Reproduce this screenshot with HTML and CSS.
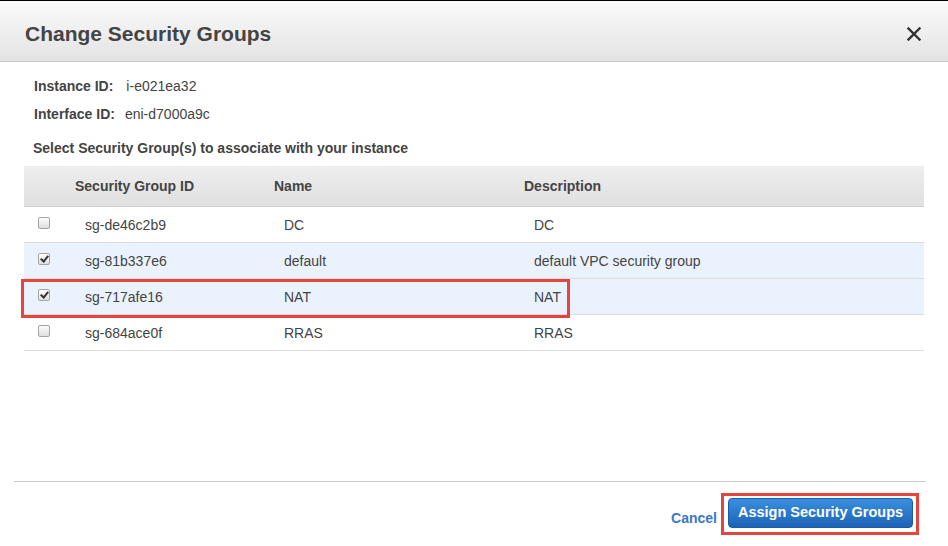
FILE: index.html
```html
<!DOCTYPE html>
<html lang="en">
<head>
  <meta charset="UTF-8">
  <meta name="viewport" content="width=device-width, initial-scale=1.0">
  <title>Change Security Groups</title>
  <link rel="stylesheet" href="styles.css">
</head>
<body>
  <div class="modal">
    <div class="modal-header">
      <h1>Change Security Groups</h1>
      <span class="close">
        <svg width="14" height="14" viewBox="0 0 14 14"><path d="M1.5 1.5 L12.5 12.5 M12.5 1.5 L1.5 12.5" stroke="#333" stroke-width="2.4" stroke-linecap="square"/></svg>
      </span>
    </div>
    <div class="modal-body">
      <div class="info-row"><span class="label">Instance ID:</span><span>i-e021ea32</span></div>
      <div class="info-row"><span class="label">Interface ID:</span><span>eni-d7000a9c</span></div>
      <div class="section-title">Select Security Group(s) to associate with your instance</div>

      <div class="sg-table">
        <div class="sg-row sg-head">
          <div></div>
          <div>Security Group ID</div>
          <div>Name</div>
          <div>Description</div>
        </div>
        <div class="sg-row">
          <div><span class="check"></span></div>
          <div>sg-de46c2b9</div>
          <div>DC</div>
          <div>DC</div>
        </div>
        <div class="sg-row selected">
          <div><span class="check checked"></span></div>
          <div>sg-81b337e6</div>
          <div>default</div>
          <div>default VPC security group</div>
        </div>
        <div class="sg-row selected">
          <div><span class="check checked"></span></div>
          <div>sg-717afe16</div>
          <div>NAT</div>
          <div>NAT</div>
        </div>
        <div class="sg-row">
          <div><span class="check"></span></div>
          <div>sg-684ace0f</div>
          <div>RRAS</div>
          <div>RRAS</div>
        </div>
        <div class="highlight-row"></div>
      </div>
    </div>
    <div class="modal-footer">
      <a class="cancel" href="#">Cancel</a>
      <span class="highlight-btn"><button class="btn-primary">Assign Security Groups</button></span>
    </div>
  </div>
</body>
</html>
```

FILE: styles.css
```css
* { margin: 0; padding: 0; box-sizing: border-box; }
body {
  font-family: 'Liberation Sans', Arial, sans-serif;
  background: #fff;
  color: #444;
  width: 948px;
  height: 546px;
  overflow: hidden;
}
.modal {
  border-top: 1px solid #000;
  height: 546px;
}

/* Header */
.modal-header {
  height: 61px;
  display: flex;
  align-items: center;
  justify-content: space-between;
  padding: 0 27px 0 25px;
  background: linear-gradient(to bottom, #fbfbfb, #e3e3e3);
  border-bottom: 1px solid #c8c8c8;
}
.modal-header h1 {
  font-size: 21px;
  font-weight: bold;
  color: #444;
  padding-top: 5px;
}
.close { display: flex; padding-top: 5px; }

/* Body */
.modal-body {
  height: 419px;
  padding: 14px 24px 0 24px;
}
.info-row {
  display: flex;
  font-size: 14px;
  line-height: 20px;
  height: 28px;
  padding-left: 10px;
}
.info-row .label {
  font-weight: bold;
  margin-right: 13px;
}
.info-row:nth-child(2) .label { margin-right: 10px; }
.section-title {
  font-size: 14px;
  font-weight: bold;
  line-height: 20px;
  padding: 6px 0 0 9px;
  height: 34px;
}

/* Table */
.sg-table { position: relative; }
.sg-row {
  display: grid;
  grid-template-columns: 51px 199px 250px 1fr;
  align-items: center;
  height: 36px;
  border-bottom: 1px solid #dcdcdc;
  font-size: 14px;
}
.sg-row > div { padding-left: 10px; }
.sg-row > div:first-child { padding-left: 14px; display: flex; }
.sg-head {
  height: 41px;
  background: linear-gradient(to bottom, #eeeeee, #e0e0e0);
  border-bottom: 1px solid #cfcfcf;
  font-weight: bold;
  color: #444;
}
.sg-head > div { padding-left: 0; }
.sg-row.selected { background: #eaf2fd; }
.check {
  width: 12px;
  height: 12px;
  border: 1px solid #a5a5a5;
  border-radius: 2px;
  background: linear-gradient(to bottom, #fdfdfd, #dedede);
  position: relative;
  margin-top: -3px;
}
.check.checked::after {
  content: '';
  position: absolute;
  left: 3px;
  top: 0px;
  width: 3px;
  height: 6px;
  border: solid #333;
  border-width: 0 2px 2px 0;
  transform: rotate(40deg);
}
.highlight-row {
  position: absolute;
  left: -3px;
  top: 113px;
  width: 549px;
  height: 39px;
  border: 3px solid #e5453f;
}

/* Footer */
.modal-footer {
  margin: 0 22px 0 14px;
  border-top: 1px solid #cbcbcb;
  display: flex;
  justify-content: flex-end;
  align-items: center;
  padding: 11px 7px 0 0;
}
.cancel {
  font-size: 14px;
  font-weight: bold;
  color: #3a77c7;
  text-decoration: none;
  margin-right: 4px;
  padding-top: 8px;
}
.highlight-btn {
  display: flex;
  border: 3px solid #e5453f;
  padding: 2px 3px 4px 4px;
}
.btn-primary {
  width: 185px;
  height: 30px;
  font-family: 'Liberation Sans', Arial, sans-serif;
  font-size: 14.5px;
  font-weight: bold;
  color: #fff;
  background: linear-gradient(to bottom, #3b8fe0, #1d63b6);
  border: 1px solid #1e5aa5;
  border-radius: 4px;
  cursor: pointer;
  padding-bottom: 2px;
}
```
